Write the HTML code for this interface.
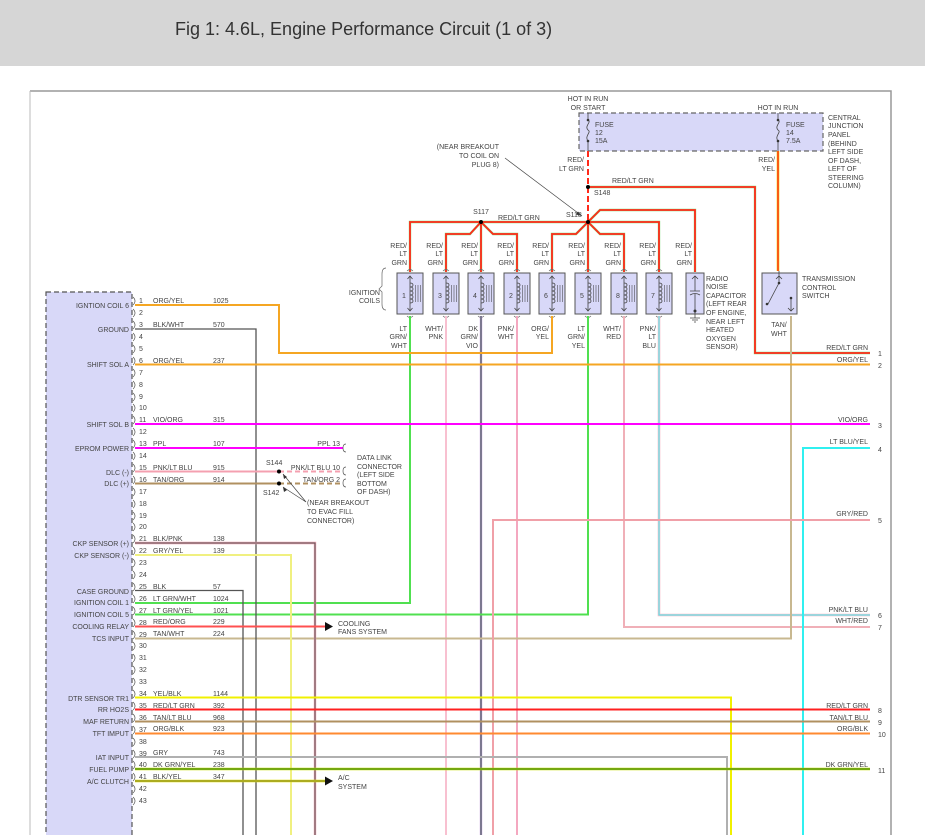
<!DOCTYPE html>
<html><head><meta charset="utf-8"><style>
html,body{margin:0;padding:0;background:#fff;width:925px;height:835px;overflow:hidden}
.hd{position:absolute;left:0;top:0;width:925px;height:66px;background:#d6d6d6}
.hd span{position:absolute;left:175px;top:19px;font:18px "Liberation Sans",sans-serif;color:#333}
svg{position:absolute;left:0;top:0}
text{font-family:"Liberation Sans",sans-serif;font-size:7px;fill:#444}
.r{text-anchor:end}.m{text-anchor:middle}
</style></head><body>
<div class="hd"><span>Fig 1: 4.6L, Engine Performance Circuit (1 of 3)</span></div>
<svg width="925" height="835" viewBox="0 0 925 835">
<defs>
<g id="coil">
<rect x="-13" y="273" width="26" height="41" fill="#d8d8f8" stroke="#555" stroke-width="1"/>
<path d="M0 276V311M-2.5 279L0 276L2.5 279M-2.5 308L0 311L2.5 308" stroke="#444" fill="none" stroke-width="0.8"/>
<path d="M0 283c4 0 4 4 0 4c4 0 4 4 0 4c4 0 4 4 0 4c4 0 4 4 0 4c4 0 4 4 0 4" stroke="#444" fill="none" stroke-width="0.8"/>
<path d="M5.5 285V302M8 285V302M10.5 285V302" stroke="#333" stroke-width="0.5"/>
<path d="M-3 271q3-3 6 0M-3 316q3 3 6 0" stroke="#666" fill="none" stroke-width="0.7"/>
</g>
</defs>
<path d="M30 91H891V835" stroke="#999" fill="none" stroke-width="1.5"/>
<path d="M30 91V835" stroke="#bbb" stroke-width="1"/>
<rect x="46" y="292" width="86" height="560" fill="#d8d8f8" stroke="#555" stroke-dasharray="5,3" stroke-width="1.2"/>
<rect x="579" y="113" width="244" height="38" fill="#d8d8f8" stroke="#666" stroke-dasharray="5,3" stroke-width="1.2"/>
<path d="M588 113V120M588 141V151M778 113V120M778 141V151" stroke="#444" stroke-width="0.8"/>
<path d="M588 120c4 2 -4 6 0 10c4 2 -4 6 0 11M778 120c4 2 -4 6 0 10c4 2 -4 6 0 11" stroke="#444" fill="none" stroke-width="0.8"/>
<circle cx="588" cy="120" r="1.3" fill="#333"/><circle cx="588" cy="141" r="1.3" fill="#333"/>
<circle cx="778" cy="120" r="1.3" fill="#333"/><circle cx="778" cy="141" r="1.3" fill="#333"/>

<g fill="none" stroke-width="2.4" stroke="#80e080">
<path d="M588 187H755V353H870"/>
<path d="M481 222H410V272M481 222L470 234H446V272M481 222V272M481 222L493 234H517V272"/>
<path d="M481 222H659V272M588 222L576 234H552V272M588 222V272M588 222L600 234H624V272M588 222L600 210H695V272"/>
</g>
<g fill="none" stroke-width="1.8" stroke="#ff2a1a">
<path d="M588 187H755V353H870"/>
<path d="M481 222H410V272M481 222L470 234H446V272M481 222V272M481 222L493 234H517V272"/>
<path d="M481 222H659V272M588 222L576 234H552V272M588 222V272M588 222L600 234H624V272M588 222L600 210H695V272"/>
</g>
<path d="M588 151V222" stroke="#ff2a1a" stroke-width="2" stroke-dasharray="6,3"/>
<path d="M778 151V271" stroke="#f0d000" stroke-width="2.6"/>
<path d="M778 151V271" stroke="#ff2a1a" stroke-width="1.4"/>
<circle cx="588" cy="187" r="2" fill="#000"/><circle cx="481" cy="222" r="2" fill="#000"/><circle cx="588" cy="222" r="2" fill="#000"/>
<path d="M505 158L582 216" stroke="#444" stroke-width="0.7"/><path d="M582 216l-6-1.5l2-3z" fill="#333"/>

<use href="#coil" x="410"/><use href="#coil" x="446"/><use href="#coil" x="481"/><use href="#coil" x="517"/>
<use href="#coil" x="552"/><use href="#coil" x="588"/><use href="#coil" x="624"/><use href="#coil" x="659"/>
<text x="404" y="298" class="m">1</text><text x="440" y="298" class="m">3</text><text x="475" y="298" class="m">4</text><text x="511" y="298" class="m">2</text>
<text x="546" y="298" class="m">6</text><text x="582" y="298" class="m">5</text><text x="618" y="298" class="m">8</text><text x="653" y="298" class="m">7</text>
<rect x="686" y="273" width="18" height="41" fill="#d8d8f8" stroke="#555"/>
<path d="M695 276V291M690 291H700M690 295q5-3 10 0M695 294V311M692 279l3-3l3 3M695 311V318M690 318H700M692 320H698M694 322H696" stroke="#444" fill="none" stroke-width="0.8"/>
<circle cx="695" cy="311" r="1.5" fill="#333"/>
<rect x="762" y="273" width="35" height="41" fill="#d8d8f8" stroke="#555"/>
<path d="M779 271V283M776 279l3-3l3 3M779 283L768 304M791 298V311M788 308l3 3l3-3" stroke="#444" fill="none" stroke-width="0.8"/>
<circle cx="779" cy="283" r="1.3" fill="#333"/><circle cx="767" cy="304" r="1.3" fill="#333"/><circle cx="791" cy="298" r="1.3" fill="#333"/>
<path d="M386 268q-4 0-4 6v12l-3 3l3 3v12q0 6 4 6" stroke="#666" fill="none" stroke-width="0.7"/>

<g fill="none" stroke-width="2">
<path d="M410 316V603H135" stroke="#50e050"/>
<path d="M446 316V835" stroke="#f8c0d0"/>
<path d="M481 316V835" stroke="#c8a0e0" stroke-width="2.4"/><path d="M481 316V835" stroke="#305040" stroke-width="1"/>
<path d="M517 316V835" stroke="#f4a8c0"/>
<path d="M552 316V353H279V305H135" stroke="#f5a623"/>
<path d="M588 316V614.5H135" stroke="#50e050"/>
<path d="M624 316V627H870" stroke="#f0b0b8"/>
<path d="M659 316V615H870" stroke="#f8b8c8" stroke-width="2.6"/><path d="M659 316V615H870" stroke="#40f0f0" stroke-width="1"/>
<path d="M791 316V638.5H135" stroke="#c8b890"/>
</g>
<g fill="none" stroke-width="2">
<path d="M135 329H256V835" stroke="#555" stroke-width="1.3"/>
<path d="M135 364.5H870" stroke="#f5a623"/>
<path d="M135 424H870" stroke="#ff00ff"/>
<path d="M135 448H343" stroke="#ff00ff"/>
<path d="M135 471.5H279" stroke="#f4a0b0"/><path d="M279 471.5H343" stroke="#f4a0b0" stroke-dasharray="5,3"/>
<path d="M135 483.5H279" stroke="#b09060"/><path d="M279 483.5H343" stroke="#b09060" stroke-dasharray="5,3"/>
<path d="M870 448H803V835" stroke="#30f0f0"/>
<path d="M870 520H493V835" stroke="#f0a0a8"/>
<path d="M135 543H315V835" stroke="#f0a0b0" stroke-width="2.4"/><path d="M135 543H315V835" stroke="#555" stroke-width="1"/>
<path d="M135 555H291V835" stroke="#f0f080"/>
<path d="M135 590.5H243V835" stroke="#555" stroke-width="1.3"/>
<path d="M135 626.5H325" stroke="#ff5050"/>
<path d="M135 697.5H731V835" stroke="#f0f000"/>
<path d="M135 709.5H870" stroke="#ff2020"/>
<path d="M135 721.5H870" stroke="#b09060"/>
<path d="M135 733.5H870" stroke="#ff8a30"/>
<path d="M135 757H727V835" stroke="#b0b0b0"/>
<path d="M135 769H870" stroke="#c8e000" stroke-width="2.6"/><path d="M135 769H870" stroke="#207020" stroke-width="1"/>
<path d="M135 781H325" stroke="#e0e000" stroke-width="2.4"/><path d="M135 781H325" stroke="#555" stroke-width="0.8"/>
</g>
<path d="M325 622l8 4.5l-8 4.5zM325 776.5l8 4.5l-8 4.5z" fill="#111"/>
<circle cx="279" cy="471.5" r="2" fill="#000"/><circle cx="279" cy="483.5" r="2" fill="#000"/>
<path d="M306 502L283 474M306 502L283 487" stroke="#444" stroke-width="0.7"/>
<path d="M283 474l1 5l3-2zM283 487l1 5l3-2z" fill="#333"/>
<path d="M346 444q-3 0-3 4q0 4 3 4M346 467q-3 0-3 4q0 4 3 4M346 479q-3 0-3 4q0 4 3 4" stroke="#555" fill="none" stroke-width="0.7"/>

<g stroke="#555" fill="none" stroke-width="0.7">
<path d="M133 297q4 4 0 8M133 309q4 4 0 8M133 321q4 4 0 8M133 333q4 4 0 8M133 345q4 4 0 8M133 357q4 4 0 8M133 369q4 4 0 8M133 381q4 4 0 8M133 393q4 4 0 8M133 404q4 4 0 8M133 416q4 4 0 8M133 428q4 4 0 8M133 440q4 4 0 8M133 452q4 4 0 8M133 464q4 4 0 8M133 476q4 4 0 8M133 488q4 4 0 8M133 500q4 4 0 8M133 512q4 4 0 8M133 523q4 4 0 8M133 535q4 4 0 8M133 547q4 4 0 8M133 559q4 4 0 8M133 571q4 4 0 8M133 583q4 4 0 8M133 595q4 4 0 8M133 607q4 4 0 8M133 619q4 4 0 8M133 631q4 4 0 8M133 642q4 4 0 8M133 654q4 4 0 8M133 666q4 4 0 8M133 678q4 4 0 8M133 690q4 4 0 8M133 702q4 4 0 8M133 714q4 4 0 8M133 726q4 4 0 8M133 738q4 4 0 8M133 750q4 4 0 8M133 761q4 4 0 8M133 773q4 4 0 8M133 785q4 4 0 8M133 797q4 4 0 8"/>
</g>

<g>
<text x="139" y="303">1</text><text x="139" y="315">2</text><text x="139" y="327">3</text><text x="139" y="339">4</text><text x="139" y="351">5</text>
<text x="139" y="363">6</text><text x="139" y="375">7</text><text x="139" y="387">8</text><text x="139" y="399">9</text><text x="139" y="410">10</text>
<text x="139" y="422">11</text><text x="139" y="434">12</text><text x="139" y="446">13</text><text x="139" y="458">14</text><text x="139" y="470">15</text>
<text x="139" y="482">16</text><text x="139" y="494">17</text><text x="139" y="506">18</text><text x="139" y="518">19</text><text x="139" y="529">20</text>
<text x="139" y="541">21</text><text x="139" y="553">22</text><text x="139" y="565">23</text><text x="139" y="577">24</text><text x="139" y="589">25</text>
<text x="139" y="601">26</text><text x="139" y="613">27</text><text x="139" y="625">28</text><text x="139" y="637">29</text><text x="139" y="648">30</text>
<text x="139" y="660">31</text><text x="139" y="672">32</text><text x="139" y="684">33</text><text x="139" y="696">34</text><text x="139" y="708">35</text>
<text x="139" y="720">36</text><text x="139" y="732">37</text><text x="139" y="744">38</text><text x="139" y="756">39</text><text x="139" y="767">40</text>
<text x="139" y="779">41</text><text x="139" y="791">42</text><text x="139" y="803">43</text>
</g>
<g>
<text x="153" y="303">ORG/YEL</text><text x="213" y="303">1025</text>
<text x="153" y="327">BLK/WHT</text><text x="213" y="327">570</text>
<text x="153" y="363">ORG/YEL</text><text x="213" y="363">237</text>
<text x="153" y="422">VIO/ORG</text><text x="213" y="422">315</text>
<text x="153" y="446">PPL</text><text x="213" y="446">107</text>
<text x="153" y="470">PNK/LT BLU</text><text x="213" y="470">915</text>
<text x="153" y="482">TAN/ORG</text><text x="213" y="482">914</text>
<text x="153" y="541">BLK/PNK</text><text x="213" y="541">138</text>
<text x="153" y="553">GRY/YEL</text><text x="213" y="553">139</text>
<text x="153" y="589">BLK</text><text x="213" y="589">57</text>
<text x="153" y="601">LT GRN/WHT</text><text x="213" y="601">1024</text>
<text x="153" y="613">LT GRN/YEL</text><text x="213" y="613">1021</text>
<text x="153" y="624">RED/ORG</text><text x="213" y="624">229</text>
<text x="153" y="636">TAN/WHT</text><text x="213" y="636">224</text>
<text x="153" y="696">YEL/BLK</text><text x="213" y="696">1144</text>
<text x="153" y="708">RED/LT GRN</text><text x="213" y="708">392</text>
<text x="153" y="720">TAN/LT BLU</text><text x="213" y="720">968</text>
<text x="153" y="731">ORG/BLK</text><text x="213" y="731">923</text>
<text x="153" y="755">GRY</text><text x="213" y="755">743</text>
<text x="153" y="767">DK GRN/YEL</text><text x="213" y="767">238</text>
<text x="153" y="779">BLK/YEL</text><text x="213" y="779">347</text>
</g>
<g>
<text x="129" y="308" class="r">IGNTION COIL 6</text>
<text x="129" y="332" class="r">GROUND</text>
<text x="129" y="367" class="r">SHIFT SOL A</text>
<text x="129" y="427" class="r">SHIFT SOL B</text>
<text x="129" y="451" class="r">EPROM POWER</text>
<text x="129" y="475" class="r">DLC (-)</text>
<text x="129" y="486" class="r">DLC (+)</text>
<text x="129" y="546" class="r">CKP SENSOR (+)</text>
<text x="129" y="558" class="r">CKP SENSOR (-)</text>
<text x="129" y="594" class="r">CASE GROUND</text>
<text x="129" y="605" class="r">IGNITION COIL 1</text>
<text x="129" y="617" class="r">IGNITION COIL 5</text>
<text x="129" y="629" class="r">COOLING RELAY</text>
<text x="129" y="641" class="r">TCS INPUT</text>
<text x="129" y="701" class="r">DTR SENSOR TR1</text>
<text x="129" y="712" class="r">RR HO2S</text>
<text x="129" y="724" class="r">MAF RETURN</text>
<text x="129" y="736" class="r">TFT IMPUT</text>
<text x="129" y="760" class="r">IAT INPUT</text>
<text x="129" y="772" class="r">FUEL PUMP</text>
<text x="129" y="784" class="r">A/C CLUTCH</text>
</g>
<text x="340" y="446" class="r">PPL  13</text>
<text x="340" y="470" class="r">PNK/LT BLU  10</text>
<text x="340" y="482" class="r">TAN/ORG    2</text>
<text x="357" y="460">DATA LINK</text><text x="357" y="469">CONNECTOR</text><text x="357" y="477">(LEFT SIDE</text><text x="357" y="486">BOTTOM</text><text x="357" y="494">OF DASH)</text>
<text x="266" y="465">S144</text><text x="263" y="495">S142</text>
<text x="307" y="505">(NEAR BREAKOUT</text><text x="307" y="514">TO EVAC FILL</text><text x="307" y="523">CONNECTOR)</text>
<text x="338" y="626">COOLING</text><text x="338" y="634">FANS SYSTEM</text>
<text x="338" y="780">A/C</text><text x="338" y="789">SYSTEM</text>
<g>
<text x="868" y="350" class="r">RED/LT GRN</text><text x="878" y="356">1</text>
<text x="868" y="362" class="r">ORG/YEL</text><text x="878" y="368">2</text>
<text x="868" y="422" class="r">VIO/ORG</text><text x="878" y="428">3</text>
<text x="868" y="444" class="r">LT BLU/YEL</text><text x="878" y="452">4</text>
<text x="868" y="516" class="r">GRY/RED</text><text x="878" y="523">5</text>
<text x="868" y="612" class="r">PNK/LT BLU</text><text x="878" y="618">6</text>
<text x="868" y="623" class="r">WHT/RED</text><text x="878" y="630">7</text>
<text x="868" y="708" class="r">RED/LT GRN</text><text x="878" y="713">8</text>
<text x="868" y="720" class="r">TAN/LT BLU</text><text x="878" y="725">9</text>
<text x="868" y="731" class="r">ORG/BLK</text><text x="878" y="737">10</text>
<text x="868" y="767" class="r">DK GRN/YEL</text><text x="878" y="773">11</text>
</g>
<text x="588" y="101" class="m">HOT IN RUN</text><text x="588" y="110" class="m">OR START</text>
<text x="595" y="127">FUSE</text><text x="595" y="135">12</text><text x="595" y="143">15A</text>
<text x="778" y="110" class="m">HOT IN RUN</text>
<text x="786" y="127">FUSE</text><text x="786" y="135">14</text><text x="786" y="143">7.5A</text>
<text x="828" y="120">CENTRAL</text><text x="828" y="128">JUNCTION</text><text x="828" y="137">PANEL</text><text x="828" y="146">(BEHIND</text><text x="828" y="154">LEFT SIDE</text><text x="828" y="163">OF DASH,</text><text x="828" y="171">LEFT OF</text><text x="828" y="180">STEERING</text><text x="828" y="188">COLUMN)</text>
<text x="499" y="149" class="r">(NEAR BREAKOUT</text><text x="499" y="158" class="r">TO COIL ON</text><text x="499" y="167" class="r">PLUG 8)</text>
<text x="584" y="162" class="r">RED/</text><text x="584" y="171" class="r">LT GRN</text>
<text x="594" y="195">S148</text><text x="612" y="183">RED/LT GRN</text>
<text x="481" y="214" class="m">S117</text><text x="498" y="220">RED/LT GRN</text><text x="566" y="217">S118</text>
<text x="775" y="162" class="r">RED/</text><text x="775" y="171" class="r">YEL</text>
<g>
<text x="407" y="248" class="r">RED/</text><text x="407" y="256" class="r">LT</text><text x="407" y="265" class="r">GRN</text>
<text x="443" y="248" class="r">RED/</text><text x="443" y="256" class="r">LT</text><text x="443" y="265" class="r">GRN</text>
<text x="478" y="248" class="r">RED/</text><text x="478" y="256" class="r">LT</text><text x="478" y="265" class="r">GRN</text>
<text x="514" y="248" class="r">RED/</text><text x="514" y="256" class="r">LT</text><text x="514" y="265" class="r">GRN</text>
<text x="549" y="248" class="r">RED/</text><text x="549" y="256" class="r">LT</text><text x="549" y="265" class="r">GRN</text>
<text x="585" y="248" class="r">RED/</text><text x="585" y="256" class="r">LT</text><text x="585" y="265" class="r">GRN</text>
<text x="621" y="248" class="r">RED/</text><text x="621" y="256" class="r">LT</text><text x="621" y="265" class="r">GRN</text>
<text x="656" y="248" class="r">RED/</text><text x="656" y="256" class="r">LT</text><text x="656" y="265" class="r">GRN</text>
<text x="692" y="248" class="r">RED/</text><text x="692" y="256" class="r">LT</text><text x="692" y="265" class="r">GRN</text>
</g>
<text x="407" y="331" class="r">LT</text><text x="407" y="339" class="r">GRN/</text><text x="407" y="348" class="r">WHT</text>
<text x="443" y="331" class="r">WHT/</text><text x="443" y="339" class="r">PNK</text>
<text x="478" y="331" class="r">DK</text><text x="478" y="339" class="r">GRN/</text><text x="478" y="348" class="r">VIO</text>
<text x="514" y="331" class="r">PNK/</text><text x="514" y="339" class="r">WHT</text>
<text x="549" y="331" class="r">ORG/</text><text x="549" y="339" class="r">YEL</text>
<text x="585" y="331" class="r">LT</text><text x="585" y="339" class="r">GRN/</text><text x="585" y="348" class="r">YEL</text>
<text x="621" y="331" class="r">WHT/</text><text x="621" y="339" class="r">RED</text>
<text x="656" y="331" class="r">PNK/</text><text x="656" y="339" class="r">LT</text><text x="656" y="348" class="r">BLU</text>
<text x="380" y="295" class="r">IGNITION</text><text x="380" y="303" class="r">COILS</text>
<text x="706" y="281">RADIO</text><text x="706" y="289">NOISE</text><text x="706" y="298">CAPACITOR</text><text x="706" y="306">(LEFT REAR</text><text x="706" y="315">OF ENGINE,</text><text x="706" y="324">NEAR LEFT</text><text x="706" y="332">HEATED</text><text x="706" y="341">OXYGEN</text><text x="706" y="349">SENSOR)</text>
<text x="802" y="281">TRANSMISSION</text><text x="802" y="290">CONTROL</text><text x="802" y="298">SWITCH</text>
<text x="779" y="327" class="m">TAN/</text><text x="779" y="336" class="m">WHT</text>
</svg>
</body></html>
